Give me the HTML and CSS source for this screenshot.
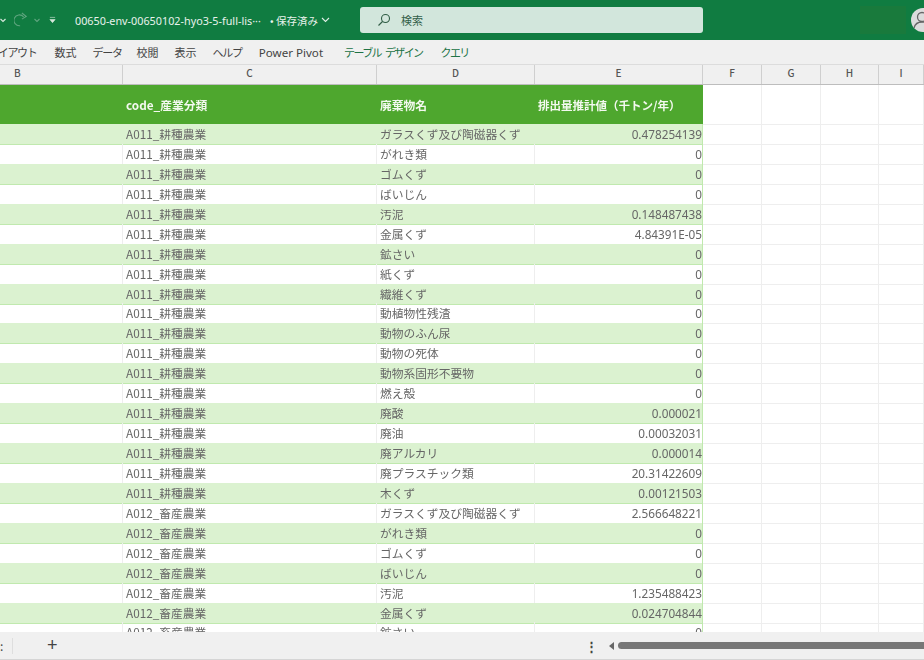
FILE: index.html
```html
<!DOCTYPE html>
<html lang="ja">
<head>
  <meta charset="UTF-8">
  <meta name="viewport" content="width=device-width, initial-scale=1.0">
  <title>Excel</title>
  <link rel="stylesheet" href="styles.css">
</head>
<body>
  <div class="app">
    <header class="title-bar">
      <svg class="qat-caret first" width="6" height="5" viewBox="0 0 6 5"><path d="M.5 1l2.5 2.5L5.500 1" fill="none" stroke="#d6e8dc" stroke-width="1.2"/></svg>
      <svg class="redo" width="14" height="16" viewBox="0 0 16 18"><path d="M11 5.5A6.2 6.2 0 1 0 7 15.5M9 1l5 4-5 3" fill="none" stroke="#5fa57f" stroke-width="1.2"/></svg>
      <svg class="qat-caret dim" width="6" height="5" viewBox="0 0 6 5"><path d="M.5 1l2.500 2.500L5.500 1" fill="none" stroke="#5fa57f" stroke-width="1.1"/></svg>
      <svg class="customize" width="7" height="8" viewBox="0 0 8 8"><path d="M1 1h6M1 3.500h6L4 7z" fill="#d6e8dc" stroke="#d6e8dc" stroke-width=".7"/></svg>
      <span class="file-name">00650-env-00650102-hyo3-5-full-lis···</span>
      <span class="saved">• 保存済み</span>
      <svg class="saved-caret" width="9" height="6" viewBox="0 0 9 6"><path d="M1 1l3.500 3.500L8 1" fill="none" stroke="#e2efe7" stroke-width="1.1"/></svg>
      <div class="search">
        <svg width="14" height="14" viewBox="0 0 14 14"><circle cx="8.500" cy="5.500" r="4" fill="none" stroke="#2f5d45" stroke-width="1.1"/><path d="M5.500 8.500L1.500 12.500" stroke="#2f5d45" stroke-width="1.1"/></svg>
        <span>検索</span>
      </div>
      <div class="account-block"></div>
      <div class="avatar">
        <svg width="18" height="26" viewBox="0 0 18 26"><circle cx="11" cy="10" r="4.500" fill="none" stroke="#666" stroke-width="1.3"/><path d="M3 21c1-4 4-6 8-6s7 2 8 6" fill="none" stroke="#666" stroke-width="1.3"/></svg>
      </div>
    </header>

    <nav class="ribbon">
      <span class="tab kana clipped">レイアウト</span>
      <span class="tab">数式</span>
      <span class="tab kana data">データ</span>
      <span class="tab">校閲</span>
      <span class="tab">表示</span>
      <span class="tab kana">ヘルプ</span>
      <span class="tab wide">Power Pivot</span>
      <span class="tab kana contextual">テーブル デザイン</span>
      <span class="tab kana contextual">クエリ</span>
    </nav>

    <div class="col-heads grid">
      <div>B</div><div>C</div><div>D</div><div>E</div><div>F</div><div>G</div><div>H</div><div>I</div>
    </div>

    <main class="sheet">
      <div class="table-head grid">
        <div></div>
        <div class="th">code_産業分類</div>
        <div class="th">廃棄物名</div>
        <div class="th num-head">排出量推計値（千トン/年）</div>
        <div class="blank"></div><div class="blank"></div><div class="blank"></div><div class="blank"></div>
      </div>
      <div class="row grid"><div></div><div>A011_耕種農業</div><div>ガラスくず及び陶磁器くず</div><div class="num">0.478254139</div><div class="blank"></div><div class="blank"></div><div class="blank"></div><div class="blank"></div></div>
      <div class="row grid"><div></div><div>A011_耕種農業</div><div>がれき類</div><div class="num">0</div><div class="blank"></div><div class="blank"></div><div class="blank"></div><div class="blank"></div></div>
      <div class="row grid"><div></div><div>A011_耕種農業</div><div>ゴムくず</div><div class="num">0</div><div class="blank"></div><div class="blank"></div><div class="blank"></div><div class="blank"></div></div>
      <div class="row grid"><div></div><div>A011_耕種農業</div><div>ばいじん</div><div class="num">0</div><div class="blank"></div><div class="blank"></div><div class="blank"></div><div class="blank"></div></div>
      <div class="row grid"><div></div><div>A011_耕種農業</div><div>汚泥</div><div class="num">0.148487438</div><div class="blank"></div><div class="blank"></div><div class="blank"></div><div class="blank"></div></div>
      <div class="row grid"><div></div><div>A011_耕種農業</div><div>金属くず</div><div class="num">4.84391E-05</div><div class="blank"></div><div class="blank"></div><div class="blank"></div><div class="blank"></div></div>
      <div class="row grid"><div></div><div>A011_耕種農業</div><div>鉱さい</div><div class="num">0</div><div class="blank"></div><div class="blank"></div><div class="blank"></div><div class="blank"></div></div>
      <div class="row grid"><div></div><div>A011_耕種農業</div><div>紙くず</div><div class="num">0</div><div class="blank"></div><div class="blank"></div><div class="blank"></div><div class="blank"></div></div>
      <div class="row grid"><div></div><div>A011_耕種農業</div><div>繊維くず</div><div class="num">0</div><div class="blank"></div><div class="blank"></div><div class="blank"></div><div class="blank"></div></div>
      <div class="row grid"><div></div><div>A011_耕種農業</div><div>動植物性残渣</div><div class="num">0</div><div class="blank"></div><div class="blank"></div><div class="blank"></div><div class="blank"></div></div>
      <div class="row grid"><div></div><div>A011_耕種農業</div><div>動物のふん尿</div><div class="num">0</div><div class="blank"></div><div class="blank"></div><div class="blank"></div><div class="blank"></div></div>
      <div class="row grid"><div></div><div>A011_耕種農業</div><div>動物の死体</div><div class="num">0</div><div class="blank"></div><div class="blank"></div><div class="blank"></div><div class="blank"></div></div>
      <div class="row grid"><div></div><div>A011_耕種農業</div><div>動物系固形不要物</div><div class="num">0</div><div class="blank"></div><div class="blank"></div><div class="blank"></div><div class="blank"></div></div>
      <div class="row grid"><div></div><div>A011_耕種農業</div><div>燃え殻</div><div class="num">0</div><div class="blank"></div><div class="blank"></div><div class="blank"></div><div class="blank"></div></div>
      <div class="row grid"><div></div><div>A011_耕種農業</div><div>廃酸</div><div class="num">0.000021</div><div class="blank"></div><div class="blank"></div><div class="blank"></div><div class="blank"></div></div>
      <div class="row grid"><div></div><div>A011_耕種農業</div><div>廃油</div><div class="num">0.00032031</div><div class="blank"></div><div class="blank"></div><div class="blank"></div><div class="blank"></div></div>
      <div class="row grid"><div></div><div>A011_耕種農業</div><div>廃アルカリ</div><div class="num">0.000014</div><div class="blank"></div><div class="blank"></div><div class="blank"></div><div class="blank"></div></div>
      <div class="row grid"><div></div><div>A011_耕種農業</div><div>廃プラスチック類</div><div class="num">20.31422609</div><div class="blank"></div><div class="blank"></div><div class="blank"></div><div class="blank"></div></div>
      <div class="row grid"><div></div><div>A011_耕種農業</div><div>木くず</div><div class="num">0.00121503</div><div class="blank"></div><div class="blank"></div><div class="blank"></div><div class="blank"></div></div>
      <div class="row grid"><div></div><div>A012_畜産農業</div><div>ガラスくず及び陶磁器くず</div><div class="num">2.566648221</div><div class="blank"></div><div class="blank"></div><div class="blank"></div><div class="blank"></div></div>
      <div class="row grid"><div></div><div>A012_畜産農業</div><div>がれき類</div><div class="num">0</div><div class="blank"></div><div class="blank"></div><div class="blank"></div><div class="blank"></div></div>
      <div class="row grid"><div></div><div>A012_畜産農業</div><div>ゴムくず</div><div class="num">0</div><div class="blank"></div><div class="blank"></div><div class="blank"></div><div class="blank"></div></div>
      <div class="row grid"><div></div><div>A012_畜産農業</div><div>ばいじん</div><div class="num">0</div><div class="blank"></div><div class="blank"></div><div class="blank"></div><div class="blank"></div></div>
      <div class="row grid"><div></div><div>A012_畜産農業</div><div>汚泥</div><div class="num">1.235488423</div><div class="blank"></div><div class="blank"></div><div class="blank"></div><div class="blank"></div></div>
      <div class="row grid"><div></div><div>A012_畜産農業</div><div>金属くず</div><div class="num">0.024704844</div><div class="blank"></div><div class="blank"></div><div class="blank"></div><div class="blank"></div></div>
      <div class="row grid"><div></div><div>A012_畜産農業</div><div>鉱さい</div><div class="num">0</div><div class="blank"></div><div class="blank"></div><div class="blank"></div><div class="blank"></div></div>
    </main>

    <footer class="status-bar">
      <span class="sheet-dots">:</span>
      <span class="divider"></span>
      <span class="add-sheet">+</span>
      <span class="more-dots">⋮</span>
      <span class="scroll-left"></span>
      <span class="scroll-thumb"></span>
    </footer>
  </div>
</body>
</html>
```

FILE: styles.css
```css
* {
  box-sizing: border-box;
}

body {
  margin: 0;
  overflow: hidden;
  background-color: #fff;
  font-family: "Noto Sans CJK JP", "Liberation Sans", sans-serif;
}

.app {
  width: 924px;
  height: 660px;
  display: flex;
  flex-direction: column;
  overflow: hidden;
  filter: blur(0.45px);
}

/* title bar */
.title-bar {
  height: 40px;
  flex: none;
  display: flex;
  align-items: center;
  background-color: #107c41;
  color: #e8f2ec;
  font-size: 11px;
}

.title-bar svg,
.title-bar span {
  flex: none;
}

.redo {
  margin-left: 8px;
}

.qat-caret.dim {
  margin-left: 6px;
}

.customize {
  margin-left: 9px;
}

.file-name {
  margin-left: 19px;
  width: 188px;
  white-space: nowrap;
  font-family: "Noto Sans", sans-serif;
  font-size: 10.8px;
}

.saved {
  margin-left: 7px;
  font-size: 10.5px;
  white-space: nowrap;
}

.saved-caret {
  margin-left: 3px;
}

.search {
  margin-left: 30px;
  width: 343px;
  height: 26px;
  flex: none;
  display: flex;
  align-items: center;
  gap: 10px;
  padding-left: 17px;
  background-color: #d2e6dc;
  border-radius: 3px;
  color: #33604a;
}

.account-block {
  margin-left: 157px;
  width: 46px;
  height: 28px;
  flex: none;
  background-color: #197a3c;
}

.avatar {
  margin-left: 5px;
  width: 24px;
  height: 24px;
  flex: none;
  border-radius: 50%;
  background-color: #dcdcdc;
  overflow: hidden;
}

.avatar svg {
  display: block;
  margin-top: -1px;
}

/* ribbon tabs */
.ribbon {
  height: 25px;
  flex: none;
  display: flex;
  align-items: center;
  background-color: #f0f0f0;
  border-bottom: 1px solid #dcdcdc;
  color: #444;
  font-size: 11px;
  white-space: nowrap;
  overflow: hidden;
}

.tab {
  margin-right: 16px;
}

.tab.kana {
  letter-spacing: -1.3px;
}

.tab.clipped {
  margin-left: -12px;
  margin-right: 18px;
}

.tab.data {
  margin-right: 15px;
}

.tab.wide {
  font-family: "Noto Sans", sans-serif;
  font-size: 11.6px;
  margin-left: 1px;
  margin-right: 21px;
}

.tab.contextual {
  color: #217346;
  letter-spacing: -1.6px;
  word-spacing: 3px;
  margin-right: 18px;
}

/* shared column widths */
.grid {
  display: grid;
  grid-template-columns: 123px 254px 158px 168px 59px 59px 58px 45px;
}

.col-heads {
  height: 20px;
  flex: none;
  background-color: #f0f0f0;
  border-bottom: 1px solid #bdbdbd;
  color: #555;
  font-size: 10px;
  font-weight: 500;
  line-height: 15px;
  text-align: center;
}

.col-heads div {
  border-right: 1px solid #cfcfcf;
}

.col-heads div:first-child {
  padding-left: 14px;
  text-align: left;
}

.sheet {
  flex: 1;
  overflow: hidden;
}

.table-head {
  height: 39px;
  color: #f3f9ef;
  font-size: 11.75px;
  font-weight: 700;
  line-height: 40px;
}

.table-head > div:not(.blank) {
  background-color: #4ea72e;
}

.th {
  padding-left: 3px;
}

.num-head {
  white-space: nowrap;
  font-size: 11.5px;
}

.row {
  height: 19.95px;
  color: #666;
  font-size: 11.75px;
  line-height: 20px;
  white-space: nowrap;
}

.row > div {
  padding: 0 0 0 3px;
  border-bottom: 1px solid #eee;
  border-right: 1px solid #eee;
}

.row > div:nth-child(-n+4) {
  border-bottom: 1px solid #c0e9ae;
}

.row > div:nth-child(4) {
  border-right: 1px solid #c0e9ae;
}

.row:nth-child(even) > div:nth-child(-n+4) {
  background-color: #dbf2d0;
  border-right-color: #dbf2d0;
}

.row:nth-child(even) > div:nth-child(4) {
  border-right-color: #c0e9ae;
}

.num {
  text-align: right;
  font-family: "Noto Sans", sans-serif;
}

.table-head .blank {
  border-right: 1px solid #eee;
  border-bottom: 1px solid #eee;
}

/* bottom bar */
.status-bar {
  height: 28px;
  flex: none;
  display: flex;
  align-items: center;
  background-color: #f0f0f0;
  border-bottom: 1px solid #d5d5d5;
  color: #444;
}

.sheet-dots {
  width: 12px;
  font-size: 12px;
}

.divider {
  width: 1px;
  height: 16px;
  background-color: #dedede;
}

.add-sheet {
  margin-left: 34px;
  font-family: "Liberation Sans", sans-serif;
  font-size: 18px;
}

.more-dots {
  margin-left: 527px;
  font-size: 13px;
  font-weight: 700;
}

.scroll-left {
  margin-left: 11px;
  width: 0;
  height: 0;
  border-top: 4px solid transparent;
  border-bottom: 4px solid transparent;
  border-right: 5px solid #666;
}

.scroll-thumb {
  margin-left: 4px;
  flex: 1;
  height: 7px;
  border-radius: 4px 0 0 4px;
  background-color: #777;
}
```
